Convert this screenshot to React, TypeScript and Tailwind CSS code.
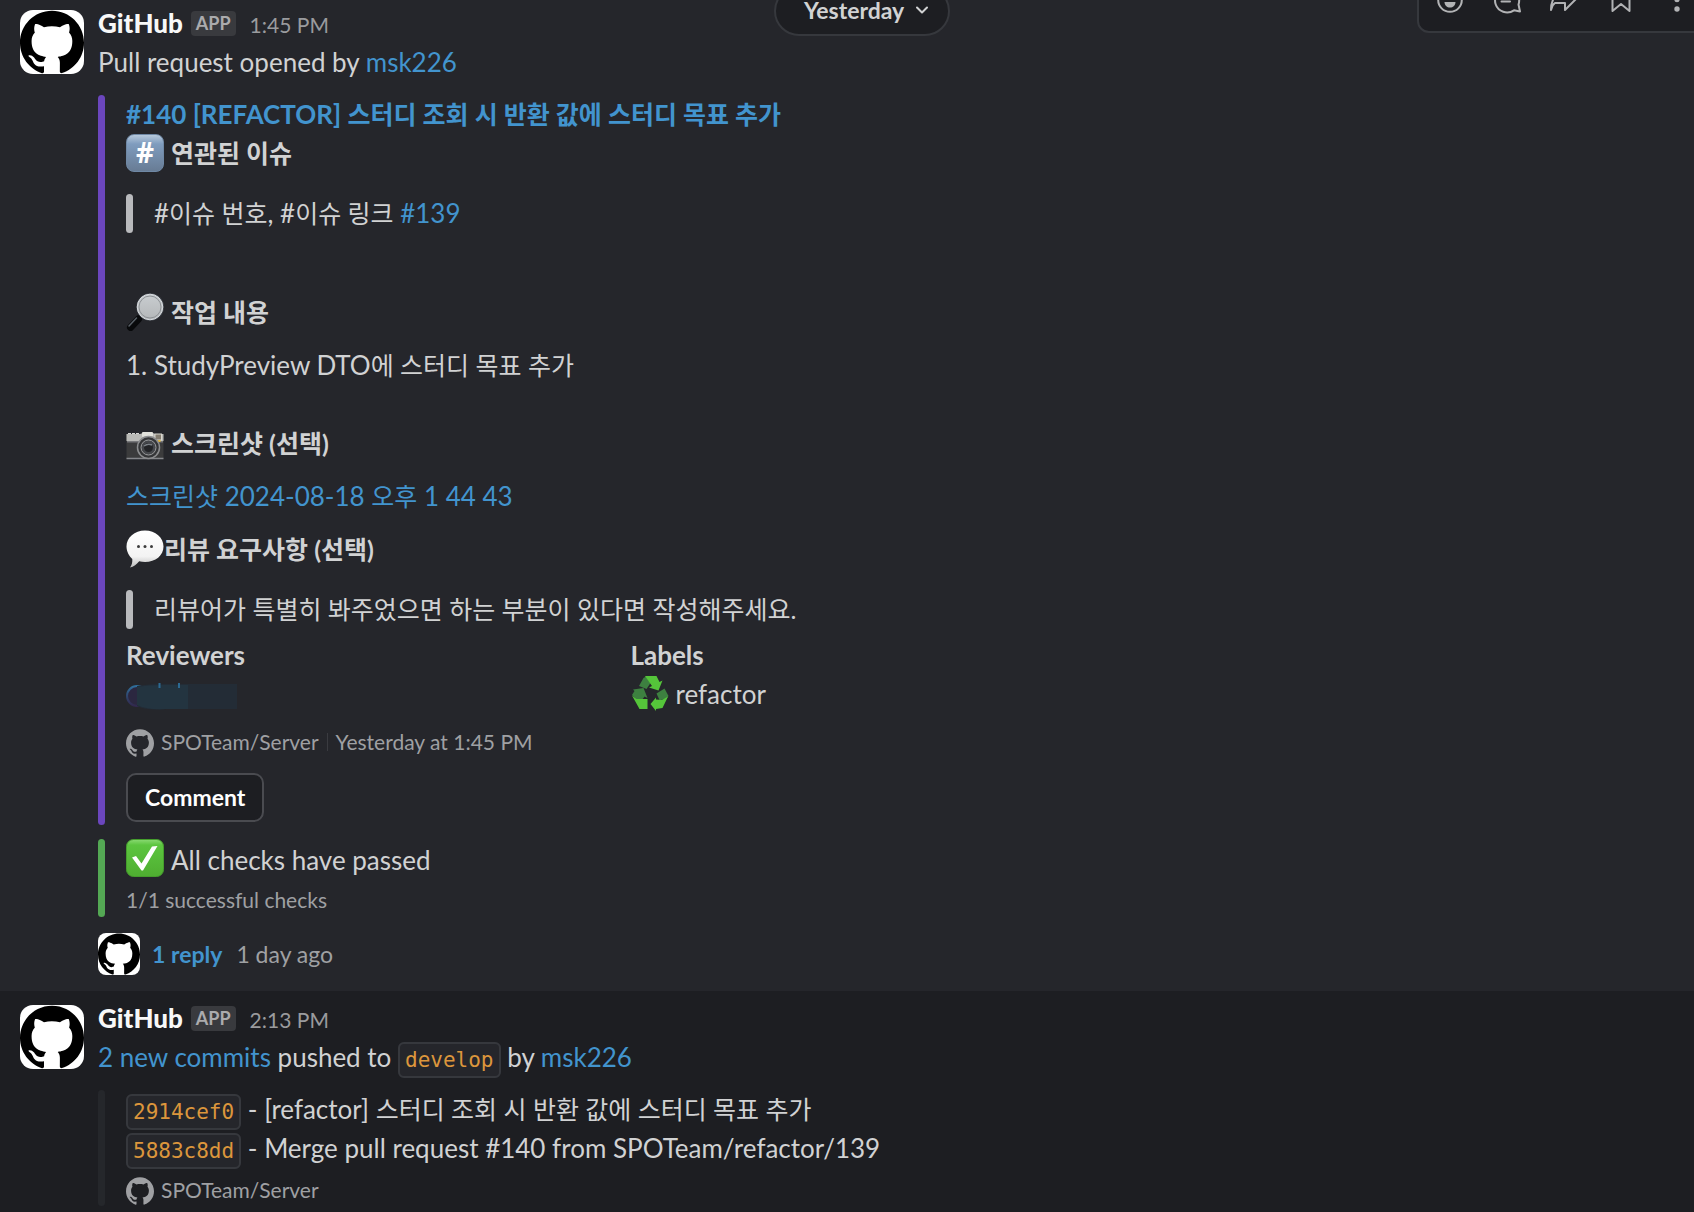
import type { ReactNode } from "react";
import { SiGithub } from "react-icons/si";

function Avatar({ small = false }: { small?: boolean }) {
  return (
    <span
      className={
        small
          ? "block size-[42px] shrink-0 overflow-hidden rounded-lg bg-white text-black"
          : "block size-16 shrink-0 overflow-hidden rounded-[13px] bg-white text-black"
      }
    >
      <SiGithub className="size-full" />
    </span>
  );
}

function Link({ children }: { children: ReactNode }) {
  return (
    <a href="#" className="text-[#4294ce] hover:underline">
      {children}
    </a>
  );
}

// Hangul runs a step smaller than the Latin text around it
function Ko({ children }: { children: ReactNode }) {
  return (
    <span lang="ko" className="text-[25px]">
      {children}
    </span>
  );
}

function Code({ children }: { children: ReactNode }) {
  return (
    <code className="rounded-md border-2 border-[#36383d] bg-[#25262b] px-[5px] py-1 font-['DejaVu_Sans_Mono',monospace] text-[21px] leading-none text-[#dc963c]">
      {children}
    </code>
  );
}

function KeycapEmoji() {
  return (
    <span className="flex size-[38px] shrink-0 items-center justify-center rounded-lg border border-[#6f88a5] bg-linear-to-b from-[#b7c9dc] via-[#7f9cbe] via-25% to-[#687c95] font-['Open_Sans',sans-serif] text-[28px] font-bold text-white">
      #
    </span>
  );
}

function SearchEmoji() {
  return (
    <svg viewBox="0 0 38 38" className="size-[38px] shrink-0" aria-hidden="true">
      <defs>
        <linearGradient id="lens" x1="0" y1="0" x2="0" y2="1">
          <stop offset="0" stopColor="#c9cdd0" />
          <stop offset="1" stopColor="#b4b7b9" />
        </linearGradient>
      </defs>
      <path d="M16 23 12.500 26.500" stroke="#b8bcc0" strokeWidth="3" />
      <path d="M12.500 26 4.500 34.500" stroke="#08090b" strokeWidth="7" strokeLinecap="round" />
      <path d="M10.500 25 3 33" stroke="#596067" strokeWidth="1.500" strokeLinecap="round" />
      <circle cx="24.200" cy="14" r="13.800" fill="#44484f" />
      <circle cx="24" cy="14" r="12.800" fill="url(#lens)" stroke="#d6dade" strokeWidth="1" />
      <circle cx="24" cy="14" r="11" fill="none" stroke="#8d9195" strokeWidth="1" />
    </svg>
  );
}

function CameraEmoji() {
  return (
    <svg viewBox="0 0 38 38" className="size-[38px] shrink-0" aria-hidden="true">
      <path d="M2 11V9h3v2h1V9h3v2h1V9h3v2" fill="#d4d4d2" />
      <rect x="0.500" y="10" width="37" height="25" rx="1.500" fill="#3b3b3c" />
      <path d="M0.500 10H14l3-1h10l2 1h8.500v7H0.500Z" fill="#b9b9b6" />
      <rect x="1" y="17" width="36" height="1.500" fill="#77777a" />
      <rect x="16" y="8" width="11" height="5" rx="1" fill="#e2e2dc" />
      <rect x="29" y="10" width="6.500" height="6" fill="#837c70" stroke="#d9d7cf" />
      <rect x="32" y="16" width="2.500" height="2" fill="#e0b537" />
      <path d="M0.500 34.500h37" stroke="#85868a" strokeWidth="1.500" />
      <circle cx="22.500" cy="23.500" r="11" fill="#343537" stroke="#8c8d8f" strokeWidth="1.500" />
      <circle cx="22.500" cy="23.500" r="7.500" fill="#45474b" stroke="#9a9b9d" strokeWidth="1" />
      <circle cx="22.500" cy="23.500" r="4.500" fill="#232427" />
      <path d="M18 22q4-3 8-1" stroke="#7b8086" strokeWidth="1.500" fill="none" />
    </svg>
  );
}

function SpeechEmoji() {
  return (
    <svg viewBox="0 0 38 38" className="size-[38px] shrink-0" aria-hidden="true">
      <defs>
        <linearGradient id="bubble" x1="0" y1="0" x2="0" y2="1">
          <stop offset="0" stopColor="#ffffff" />
          <stop offset="0.700" stopColor="#f3f3f3" />
          <stop offset="1" stopColor="#bdbdbd" />
        </linearGradient>
      </defs>
      <path
        d="M19 0.500C29.500 0.500 37.500 7.500 37.500 16.500S29.500 32 19 32c-2 0-4-.2-5.800-.7C11 34 7.500 37 4 37.500c2-2.500 2.500-5.500 2.300-8.500C3 26 .5 21.500 .5 16.500 .5 7.500 8.500.5 19 .5Z"
        fill="url(#bubble)"
      />
      <circle cx="12.500" cy="16.500" r="1.500" fill="#3c3c3c" />
      <circle cx="19" cy="16.500" r="1.500" fill="#3c3c3c" />
      <circle cx="25.500" cy="16.500" r="1.500" fill="#3c3c3c" />
    </svg>
  );
}

function RecycleEmoji() {
  return (
    <svg viewBox="0 0 38 38" className="size-[38px] shrink-0" aria-hidden="true">
      <path d="M8 12 12.500 4 15 2.500 19.500 9 15.500 15Z" fill="#3d8040" />
      <path d="M14 2h11.500l3 6 3-1.500-4 10-9.500-3 3-1.500Z" fill="#55c53a" />
      <path d="M2 15.500 12.500 14l4 10-3-1.500-2.500 3.500H6L1 21l2.500-4Z" fill="#3d8040" />
      <path d="M1 21.500 5.500 25h11v10H8.500Z" fill="#55c53a" />
      <path d="M25.500 19.500 33.500 14.500l4 7.500-2.500 3.500-6.500.5Z" fill="#3d8040" />
      <path d="M19.500 30 25 23.500v2l6 .5 6-3.500L31.500 34l-6.500 1v2Z" fill="#55c53a" />
    </svg>
  );
}

function CheckEmoji() {
  return (
    <svg viewBox="0 0 38 38" className="size-[38px] shrink-0" aria-hidden="true">
      <defs>
        <linearGradient id="check" x1="0" y1="0" x2="0" y2="1">
          <stop offset="0" stopColor="#8ad973" />
          <stop offset="0.150" stopColor="#5cc53f" />
          <stop offset="1" stopColor="#4fae31" />
        </linearGradient>
      </defs>
      <rect x="0.500" y="0.500" width="37" height="37" rx="7" fill="url(#check)" stroke="#459e2c" />
      <path d="M6 18.500 10 17l5.500 7.500L26 7.500l5.500-.5L17 31.500h-1.500Z" fill="#fff" />
    </svg>
  );
}

// Smudged-out reviewer handle
function HiddenName() {
  return (
    <svg viewBox="0 0 111 28" className="h-7 w-[111px]" role="img" aria-label="Hidden reviewer">
      <defs>
        <linearGradient id="ring" x1="0" y1="0" x2="0" y2="1">
          <stop offset="0" stopColor="#2f6f9c" />
          <stop offset="0.500" stopColor="#2f456c" />
          <stop offset="1" stopColor="#32284e" />
        </linearGradient>
      </defs>
      <circle cx="11" cy="13" r="10" fill="#2b2740" stroke="url(#ring)" strokeWidth="2" />
      <path d="M11 3q10-2 26-2h74v25H40q-20 2-29-3Z" fill="#232c36" />
      <path d="M11 4q10-2 26-2h25v24H40q-20 1-29-4Z" fill="#233440" />
      <path d="M33.500 0v5M53 0v5" stroke="#2c6a93" strokeWidth="2" />
    </svg>
  );
}

function Toolbar() {
  const button = "flex size-[57px] items-center justify-center text-[#b2b3b5]";
  const icon = "size-[30px] fill-none stroke-current stroke-2";
  return (
    <div className="absolute -top-[30px] -right-[18px] flex rounded-xl border-2 border-[#36383d] bg-[#1d1e22] pr-1 pb-0.5 pl-0.5">
      <button type="button" aria-label="Add reaction" className={button}>
        <svg viewBox="0 0 30 30" className={icon}>
          <circle cx="15" cy="14" r="11.800" />
          <path d="M9.500 16h11c0 3.500-2.500 5.500-5.500 5.500S9.500 19.500 9.500 16Z" fill="currentColor" stroke="none" />
          <path d="M11.500 9v2M18.500 9v2" strokeLinecap="round" />
        </svg>
      </button>
      <button type="button" aria-label="Reply in thread" className={button}>
        <svg viewBox="0 0 30 30" className={icon}>
          <path d="M22 24.300A12 11.500 0 1 1 26.500 18.500L28 25.500Z" strokeLinejoin="round" />
          <path d="M9.500 10.500h11M9.500 15.500h8.500" strokeLinecap="round" />
        </svg>
      </button>
      <button type="button" aria-label="Forward message" className={button}>
        <svg viewBox="0 0 30 30" className={icon}>
          <path d="M2 24C2 12 8 7 16 7V1l12 11-12 12v-7H6q-3 2-4 7Z" strokeLinejoin="round" />
        </svg>
      </button>
      <button type="button" aria-label="Save for later" className={button}>
        <svg viewBox="0 0 30 30" className={icon}>
          <path d="M6.500 25V4.500q0-2 2-2h13q2 0 2 2V25L15 18Z" strokeLinejoin="round" />
        </svg>
      </button>
      <button type="button" aria-label="More actions" className={button}>
        <svg viewBox="0 0 30 30" className="size-[30px] fill-current">
          <circle cx="14" cy="4" r="2.700" />
          <circle cx="14" cy="13.500" r="2.700" />
          <circle cx="14" cy="23" r="2.700" />
        </svg>
      </button>
    </div>
  );
}

function MessageHeader({ time }: { time: string }) {
  return (
    <header className="flex h-[39px] items-center">
      <span className="font-black text-[#f8f8f8]">GitHub</span>
      <span className="ml-2 flex h-[25px] items-center rounded bg-[#393a3e] px-[5px] text-[18px] font-bold text-[#ababad]">
        APP
      </span>
      <time className="ml-3.5 pt-0.5 text-[21px] text-[#9a9b9e]">{time}</time>
    </header>
  );
}

function Attachment({ bar, children }: { bar: string; children: ReactNode }) {
  return (
    <div className="mt-[13px] flex">
      <div className={`w-[7px] shrink-0 rounded-full ${bar}`} />
      <div className="min-w-0 grow pl-[21px]">{children}</div>
    </div>
  );
}

function Heading({ emoji, tight = false, children }: { emoji: ReactNode; tight?: boolean; children: ReactNode }) {
  return (
    <h3 className={tight ? "flex h-[39px] items-center font-bold" : "flex h-[39px] items-center gap-[7px] font-bold"}>
      <span className="mb-0.5">{emoji}</span>
      <Ko>{children}</Ko>
    </h3>
  );
}

function Quote({ children }: { children: ReactNode }) {
  return (
    <blockquote className="mt-[21px] flex gap-[21px]">
      <span className="w-[7px] shrink-0 rounded-full bg-[#b9babd]" />
      <p>{children}</p>
    </blockquote>
  );
}

function RepoFooter({ children }: { children?: ReactNode }) {
  return (
    <footer className="flex items-center text-[21px] leading-[32px] text-[#9fa0a3]">
      <SiGithub className="mt-0.5 mr-[7px] size-7" />
      <span>SPOTeam/Server</span>
      {children}
    </footer>
  );
}

export default function App() {
  return (
    <main className="relative min-h-screen overflow-hidden bg-[#1d1e22] font-['Lato','Noto_Sans_CJK_KR',sans-serif] text-[26px] leading-[39px] text-[#d1d2d3]">
      <article className="flex gap-3.5 bg-[#25262b] px-5 pt-1 pb-4">
        <div className="pt-1.5">
          <Avatar />
        </div>
        <div className="min-w-0 grow">
          <MessageHeader time="1:45 PM" />
          <p>
            Pull request opened by <Link>msk226</Link>
          </p>

          <Attachment bar="bg-[#6b46bd]">
            <h2 className="font-bold">
              <Link>
                #140 [REFACTOR] <Ko>스터디 조회 시 반환 값에 스터디 목표 추가</Ko>
              </Link>
            </h2>
            <Heading emoji={<KeycapEmoji />}>연관된 이슈</Heading>
            <Quote>
              #<Ko>이슈 번호</Ko>, #<Ko>이슈 링크</Ko> <Link>#139</Link>
            </Quote>

            <div className="mt-15">
              <Heading emoji={<SearchEmoji />}>작업 내용</Heading>
            </div>
            <ol className="mt-3.5 list-inside list-decimal">
              <li>
                StudyPreview DTO<Ko>에 스터디 목표 추가</Ko>
              </li>
            </ol>

            <div className="mt-[39px]">
              <Heading emoji={<CameraEmoji />}>스크린샷 (선택)</Heading>
            </div>
            <p className="mt-3.5">
              <Link>
                <Ko>스크린샷</Ko> 2024-08-18 <Ko>오후</Ko> 1 44 43
              </Link>
            </p>

            <div className="mt-3.5">
              <Heading emoji={<SpeechEmoji />} tight>
                리뷰 요구사항 (선택)
              </Heading>
            </div>
            <Quote>
              <Ko>리뷰어가 특별히 봐주었으면 하는 부분이 있다면 작성해주세요.</Ko>
            </Quote>

            <dl className="mt-[7px] grid max-w-[1009px] grid-cols-2">
              <div>
                <dt className="font-bold">Reviewers</dt>
                <dd className="flex h-[39px] items-center pt-1">
                  <HiddenName />
                </dd>
              </div>
              <div>
                <dt className="font-bold">Labels</dt>
                <dd className="flex h-[39px] items-center gap-[7px]">
                  <span className="mb-1">
                    <RecycleEmoji />
                  </span>
                  refactor
                </dd>
              </div>
            </dl>

            <div className="mt-3">
              <RepoFooter>
                <span className="mx-2 h-[18px] w-px bg-[#3a3b40]" />
                <span>Yesterday at 1:45 PM</span>
              </RepoFooter>
            </div>
            <button
              type="button"
              className="mt-[15px] mb-[3px] block h-[49px] rounded-[10px] border-2 border-[#4a4b50] bg-[#1d1e22] px-[17px] text-[23px] leading-none font-bold text-white"
            >
              Comment
            </button>
          </Attachment>

          <div className="pt-px">
            <Attachment bar="bg-[#54a854]">
              <p className="flex items-center gap-[7px]">
                <span className="mb-1">
                  <CheckEmoji />
                </span>
                All checks have passed
              </p>
              <p className="pt-0.5 text-[21px] leading-[34px] text-[#9fa0a3]">1/1 successful checks</p>
            </Attachment>
          </div>

          <div className="mt-4 flex items-center gap-3">
            <Avatar small />
            <button type="button" className="text-[23px] font-bold text-[#4294ce]">
              1 reply
            </button>
            <span className="ml-0.5 text-[23px] text-[#9fa0a3]">1 day ago</span>
          </div>
        </div>
      </article>

      <article className="flex gap-3.5 px-5 pt-2">
        <div className="pt-1.5">
          <Avatar />
        </div>
        <div className="min-w-0 grow">
          <MessageHeader time="2:13 PM" />
          <p>
            <Link>2 new commits</Link> pushed to <Code>develop</Code> by <Link>msk226</Link>
          </p>
          <Attachment bar="bg-[#25272b]">
            <p>
              <Code>2914cef0</Code> - [refactor] <Ko>스터디 조회 시 반환 값에 스터디 목표 추가</Ko>
            </p>
            <p>
              <Code>5883c8dd</Code> - Merge pull request #140 from SPOTeam/refactor/139
            </p>
            <div className="mt-1.5">
              <RepoFooter />
            </div>
          </Attachment>
        </div>
      </article>

      <button
        type="button"
        className="absolute -top-[14px] left-1/2 flex h-[50px] -translate-x-[73px] items-center gap-3 rounded-full border-2 border-[#36383d] bg-[#1d1e22] pr-5 pb-0.5 pl-7 text-[23px] leading-none font-bold text-[#d1d2d3]"
      >
        Yesterday
        <svg viewBox="0 0 12 8" className="h-2 w-3 fill-none stroke-current stroke-2">
          <path d="M1 1.500 6 6.500 11 1.500" strokeLinecap="round" strokeLinejoin="round" />
        </svg>
      </button>
      <Toolbar />
    </main>
  );
}
